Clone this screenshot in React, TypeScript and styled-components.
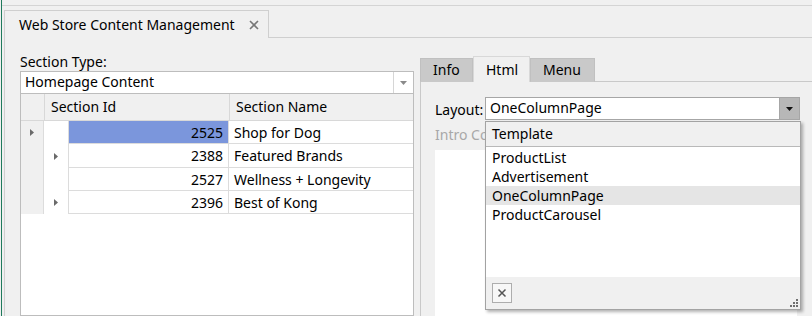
import styled, { createGlobalStyle } from "styled-components";

const GlobalStyle = createGlobalStyle`
  html, body {
    margin: 0;
    padding: 0;
    background: #f0f0f0;
  }
  body {
    font-family: "Noto Sans", "Open Sans", sans-serif;
    font-size: 14px;
    color: #000;
  }
`;

const Window = styled.div`
  width: 812px;
  height: 316px;
  overflow: hidden;
  padding-left: 1px;
  box-sizing: border-box;
  background: #f0f0f0;
`;

const Frame = styled.div`
  height: 100%;
  border-left: 1px solid #1f7a5c;
  display: flex;
  flex-direction: column;
`;

const TopStrip = styled.div`
  height: 5px;
  flex: none;
  border-bottom: 1px solid #d4d4d4;
`;

const DocTabBar = styled.div`
  height: 32px;
  flex: none;
  display: flex;
  align-items: flex-end;
  padding-left: 2px;
`;

const DocTab = styled.div`
  height: 27px;
  width: 263px;
  box-sizing: content-box;
  border: 1px solid #cfcfcf;
  border-bottom: none;
  display: flex;
  align-items: center;
  gap: 10px;
`;

const DocTabTitle = styled.span`
  margin-left: 14px;
  line-height: 16px;
  padding-top: 1px;
`;

const CloseIcon = styled.svg`
  margin-left: 4px;
`;

const TabFiller = styled.div`
  flex: 1;
  border-bottom: 1px solid #cfcfcf;
`;

const DocBody = styled.div`
  flex: 1;
  display: flex;
  margin-left: 2px;
  border-left: 1px solid #cfcfcf;
  padding-left: 15px;
  min-height: 0;
`;

const LeftPanel = styled.div`
  width: 394px;
  flex: none;
  display: flex;
  flex-direction: column;
  padding-top: 16px;
`;

const FieldLabel = styled.div`
  line-height: 16px;
  height: 17px;
`;

const ComboLine = styled.div`
  display: flex;
  flex: none;
`;

const Combo = styled.div<{ $active?: boolean }>`
  height: 23px;
  box-sizing: border-box;
  border: 1px solid ${(p) => (p.$active ? "#a6a6a6" : "#bdbdbd")};
  background: #fff;
  display: flex;
  align-items: stretch;
  flex: 1;
`;

const ComboText = styled.div`
  flex: 1;
  padding-left: 4px;
  line-height: 20px;
`;

const ComboButton = styled.div<{ $active?: boolean }>`
  width: 19px;
  display: flex;
  align-items: center;
  justify-content: center;
  border-left: 1px solid ${(p) => (p.$active ? "#a6a6a6" : "#d6d6d6")};
  background: ${(p) => (p.$active ? "#b7b7b7" : "#fff")};
`;

const Grid = styled.div`
  flex: 1;
  background: #fff;
  border: 1px solid #bdbdbd;
  border-top: none;
  display: flex;
  flex-direction: column;
`;

const HeaderRow = styled.div`
  display: grid;
  grid-template-columns: 23px 185px 1fr;
  height: 26px;
  background: #f0f0f0;
  border-bottom: 1px solid #d8d8d8;
`;

const HeaderCell = styled.div`
  border-left: 1px solid #d8d8d8;
  padding-left: 6px;
  line-height: 26px;
  &:first-child {
    border-left: none;
  }
`;

const Row = styled.div<{ $h: number }>`
  display: grid;
  grid-template-columns: 23px 25px 160px 1fr;
  height: ${(p) => p.$h}px;
`;

const IndicatorCell = styled.div`
  background: #f0f0f0;
  border-right: 1px solid #dcdcdc;
  display: flex;
  align-items: center;
  justify-content: center;
`;

const ExpanderCell = styled.div`
  display: flex;
  align-items: center;
  justify-content: center;
  border-right: 1px solid #dcdcdc;
`;

const DataCell = styled.div<{ $align?: string; $selected?: boolean }>`
  text-align: ${(p) => p.$align || "left"};
  background: ${(p) => (p.$selected ? "#7b96dc" : "#fff")};
  border-bottom: 1px solid #dcdcdc;
  border-right: 1px solid #dcdcdc;
  display: flex;
  align-items: center;
  justify-content: ${(p) => (p.$align === "right" ? "flex-end" : "flex-start")};
  padding: 0 5px;
  &:last-child {
    border-right: none;
  }
`;

const RightPanel = styled.div`
  flex: 1;
  margin-left: 6px;
  padding-top: 18px;
  display: flex;
  flex-direction: column;
`;

const TabStrip = styled.div`
  display: flex;
  align-items: flex-end;
  height: 26px;
  flex: none;
`;

const Tab = styled.div<{ $active?: boolean; $w: number }>`
  width: ${(p) => p.$w}px;
  box-sizing: border-box;
  height: ${(p) => (p.$active ? 26 : 24)}px;
  background: ${(p) => (p.$active ? "#f0f0f0" : "#c9c9c9")};
  border: 1px solid ${(p) => (p.$active ? "#d8d8d8" : "#c0c0c0")};
  border-bottom: ${(p) => (p.$active ? "none" : "1px solid #c9c9c9")};
  padding-left: 12px;
  line-height: ${(p) => (p.$active ? 25 : 21)}px;
`;

const PanelFiller = styled.div`
  flex: 1;
  border-bottom: 1px solid #c9c9c9;
`;

const TabPanel = styled.div`
  flex: 1;
  border-left: 1px solid #c9c9c9;
  padding: 15px 12px 0 14px;
  display: flex;
  flex-direction: column;
`;

const LayoutRow = styled.div`
  display: flex;
  align-items: center;
  height: 24px;
`;

const LayoutLabel = styled.div`
  width: 50px;
  flex: none;
`;

const ComboWrap = styled.div`
  position: relative;
  flex: 1;
  display: flex;
  height: 24px;
`;

const IntroLabel = styled.div`
  margin-top: 6px;
  width: 50px;
  overflow: hidden;
  white-space: nowrap;
  line-height: 16px;
  color: #a8a8a8;
`;

const TextArea = styled.div`
  flex: 1;
  margin-top: 7px;
  margin-right: 3px;
  background: #fff;
`;

const Popup = styled.div`
  position: absolute;
  top: 24px;
  left: 0;
  width: 316px;
  height: 189px;
  box-sizing: border-box;
  border: 1px solid #a3a3a3;
  background: #fff;
  box-shadow: 2px 2px 3px rgba(0, 0, 0, 0.3);
  display: flex;
  flex-direction: column;
  z-index: 2;
`;

const PopupHeader = styled.div`
  height: 25px;
  flex: none;
  box-sizing: border-box;
  background: #f0f0f0;
  border-bottom: 1px solid #b9b9b9;
  padding-left: 6px;
  line-height: 24px;
`;

const ItemList = styled.div`
  flex: 1;
  padding-top: 1px;
`;

const Item = styled.div<{ $hot?: boolean }>`
  height: 19px;
  line-height: 19px;
  padding-left: 6px;
  background: ${(p) => (p.$hot ? "#e5e5e5" : "transparent")};
`;

const PopupFooter = styled.div`
  height: 32px;
  flex: none;
  background: #f0f0f0;
  display: flex;
  align-items: center;
  justify-content: space-between;
  padding: 0 1px 0 6px;
`;

const ClearButton = styled.div`
  width: 20px;
  height: 20px;
  box-sizing: border-box;
  border: 1px solid #adadad;
  background: #f7f7f7;
  display: flex;
  align-items: center;
  justify-content: center;
`;

const Grip = styled.svg`
  align-self: flex-end;
  margin-bottom: 1px;
`;

const Arrow = ({ color = "#6a6a6a" }: { color?: string }) => (
  <svg width="4" height="7" viewBox="0 0 4 7">
    <path d="M0 0 L4 3.5 L0 7 Z" fill={color} />
  </svg>
);

const Down = ({ color }: { color: string }) => (
  <svg width="7" height="4" viewBox="0 0 7 4">
    <path d="M0 0 H7 L3.5 4 Z" fill={color} />
  </svg>
);

const rows = [
  { id: 2525, name: "Shop for Dog", current: true, expand: false, h: 23 },
  { id: 2388, name: "Featured Brands", current: false, expand: true, h: 24 },
  { id: 2527, name: "Wellness + Longevity", current: false, expand: false, h: 23 },
  { id: 2396, name: "Best of Kong", current: false, expand: true, h: 23 },
];

const layouts = ["ProductList", "Advertisement", "OneColumnPage", "ProductCarousel"];

const App = () => {
  return (
    <Window>
      <GlobalStyle />
      <Frame>
        <TopStrip />
        <DocTabBar>
          <DocTab>
            <DocTabTitle>Web Store Content Management</DocTabTitle>
            <CloseIcon width="10" height="10" viewBox="0 0 10 10">
              <path d="M1 1 L9 9 M9 1 L1 9" stroke="#777" strokeWidth="1.6" />
            </CloseIcon>
          </DocTab>
          <TabFiller />
        </DocTabBar>
        <DocBody>
          <LeftPanel>
            <FieldLabel>Section Type:</FieldLabel>
            <ComboLine>
              <Combo>
                <ComboText>Homepage Content</ComboText>
                <ComboButton>
                  <Down color="#8a8a8a" />
                </ComboButton>
              </Combo>
            </ComboLine>
            <Grid>
              <HeaderRow>
                <HeaderCell />
                <HeaderCell>Section Id</HeaderCell>
                <HeaderCell>Section Name</HeaderCell>
              </HeaderRow>
              {rows.map((r) => (
                <Row key={r.id} $h={r.h}>
                  <IndicatorCell>{r.current && <Arrow />}</IndicatorCell>
                  <ExpanderCell>{r.expand && <Arrow />}</ExpanderCell>
                  <DataCell $align="right" $selected={r.current}>
                    {r.id}
                  </DataCell>
                  <DataCell>{r.name}</DataCell>
                </Row>
              ))}
            </Grid>
          </LeftPanel>
          <RightPanel>
            <TabStrip>
              <Tab $w={53}>Info</Tab>
              <Tab $w={57} $active>
                Html
              </Tab>
              <Tab $w={65}>Menu</Tab>
              <PanelFiller />
            </TabStrip>
            <TabPanel>
              <LayoutRow>
                <LayoutLabel>Layout:</LayoutLabel>
                <ComboWrap>
                  <Combo $active>
                    <ComboText>OneColumnPage</ComboText>
                    <ComboButton $active>
                      <Down color="#111" />
                    </ComboButton>
                  </Combo>
                  <Popup>
                    <PopupHeader>Template</PopupHeader>
                    <ItemList>
                      {layouts.map((l) => (
                        <Item key={l} $hot={l === "OneColumnPage"}>
                          {l}
                        </Item>
                      ))}
                    </ItemList>
                    <PopupFooter>
                      <ClearButton>
                        <svg width="10" height="10" viewBox="0 0 10 10">
                          <path d="M1.5 1.5 L8.5 8.5 M8.5 1.5 L1.5 8.5" stroke="#555" strokeWidth="1.5" />
                        </svg>
                      </ClearButton>
                      <Grip width="10" height="10" viewBox="0 0 10 10">
                        <g fill="#6f6f6f">
                          <rect x="7" y="1" width="2" height="2" />
                          <rect x="4" y="4" width="2" height="2" />
                          <rect x="7" y="4" width="2" height="2" />
                          <rect x="1" y="7" width="2" height="2" />
                          <rect x="4" y="7" width="2" height="2" />
                          <rect x="7" y="7" width="2" height="2" />
                        </g>
                      </Grip>
                    </PopupFooter>
                  </Popup>
                </ComboWrap>
              </LayoutRow>
              <IntroLabel>Intro Content</IntroLabel>
              <TextArea />
            </TabPanel>
          </RightPanel>
        </DocBody>
      </Frame>
    </Window>
  );
};

export default App;
